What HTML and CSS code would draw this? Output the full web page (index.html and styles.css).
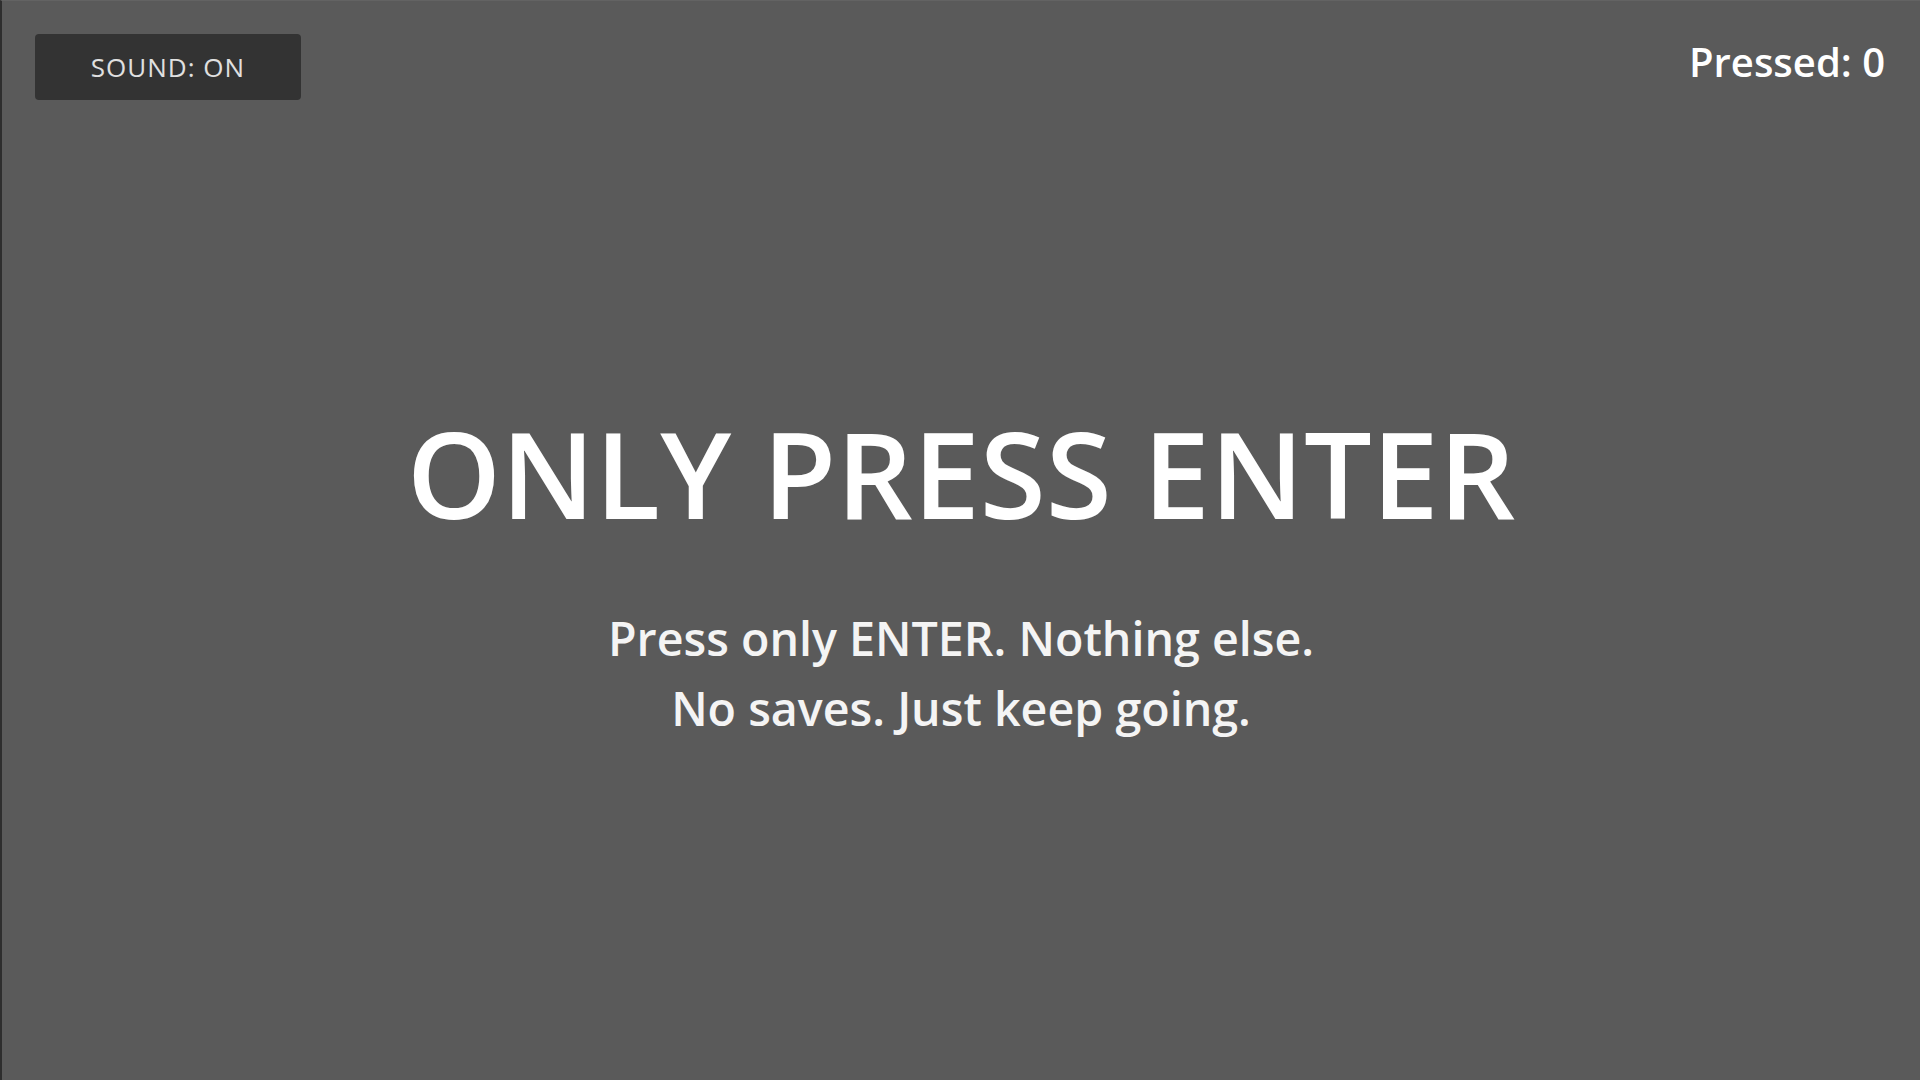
FILE: index.html
```html
<!DOCTYPE html>
<html lang="en">
<head>
<meta charset="utf-8">
<title>Only Press Enter</title>
<link rel="stylesheet" href="styles.css">
</head>
<body>
<div class="screen">
  <header class="topbar">
    <button class="sound-btn" type="button">SOUND: ON</button>
    <div class="counter">Pressed: 0</div>
  </header>
  <main class="center">
    <h1 class="title">ONLY PRESS ENTER</h1>
    <p class="subtitle">Press only ENTER. Nothing else.<br>No saves. Just keep going.</p>
  </main>
</div>
</body>
</html>
```
FILE: styles.css
```css
html, body {
  margin: 0;
  padding: 0;
  height: 100%;
}
body {
  background: #5a5a5a;
  font-family: "Open Sans", "DejaVu Sans", sans-serif;
  color: #fff;
  overflow: hidden;
}
.screen {
  height: 100vh;
  display: flex;
  flex-direction: column;
  border-left: 2px solid #2e2e2e;
  border-top: 1px solid #636363;
  box-sizing: border-box;
}
.topbar {
  display: flex;
  justify-content: space-between;
  align-items: flex-start;
  padding: 33px 35px 0 33px;
}
.sound-btn {
  width: 266px;
  height: 66px;
  background: #333333;
  border: none;
  border-radius: 4px;
  color: #e0e0e0;
  font-family: "Open Sans", "DejaVu Sans", sans-serif;
  font-size: 26px;
  font-weight: 500;
  letter-spacing: 1px;
  line-height: 1;
  padding: 0;
}
.counter {
  font-size: 40px;
  font-weight: 600;
  line-height: 1;
  margin-top: 8px;
}
.center {
  flex: 1;
  display: flex;
  flex-direction: column;
  align-items: center;
  padding-top: 301px;
}
.title {
  margin: 0;
  font-size: 120px;
  font-weight: 600;
  line-height: 1.2;
}
.subtitle {
  margin: 58px 0 0;
  font-size: 46.6px;
  font-weight: 600;
  line-height: 70px;
  text-align: center;
  color: #f4f4f4;
}
```
